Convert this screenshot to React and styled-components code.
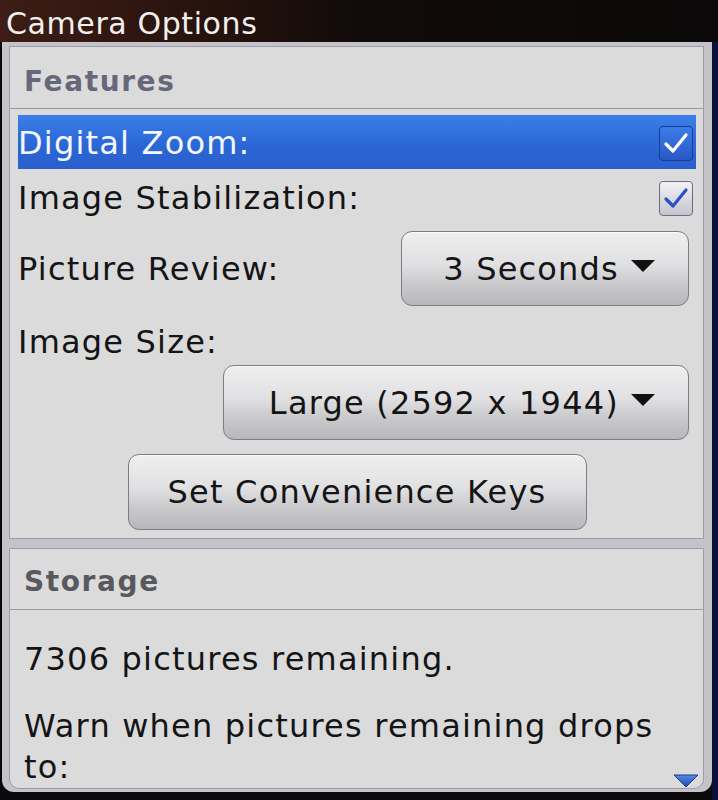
import React from "react";
import styled, { createGlobalStyle } from "styled-components";

const Global = createGlobalStyle`
  html, body { margin: 0; padding: 0; background: #0d0a08; }
  body { font-family: "DejaVu Sans", "Liberation Sans", sans-serif; }
  * { box-sizing: border-box; }
`;

const Page = styled.div`
  width: 718px;
  height: 800px;
  background: linear-gradient(90deg, #0a0808 0%, #0a0808 99%, #0b1038 99.3%);
  display: flex;
  flex-direction: column;
  overflow: hidden;
`;

const TitleBar = styled.div`
  height: 42px;
  flex: none;
  padding-left: 6px;
  background: linear-gradient(90deg, #3d1d15 0%, #2a140e 25%, #110b09 50%, #0a0808 100%);
  color: #f2f0ee;
  font-size: 30px;
  letter-spacing: 0.6px;
  line-height: 47px;
  white-space: nowrap;
  overflow: hidden;
`;

const Frame = styled.div`
  flex: 1;
  margin: 0 6px 8px 2px;
  background: #c3c3c9;
  border-radius: 0 0 12px 12px;
  padding: 4px 8px 3px 7px;
  display: flex;
  flex-direction: column;
  gap: 9px;
  min-height: 0;
`;

const Card = styled.section`
  background: #dbdbdc;
  border: 1px solid #9c9ca6;
  display: flex;
  flex-direction: column;
  position: relative;
  ${(p) => (p.$fill ? "flex: 1; min-height: 0; overflow: hidden; border-radius: 0 0 10px 10px;" : "flex: none;")}
`;

const SectionHeader = styled.div`
  height: ${(p) => p.$h}px;
  padding: ${(p) => p.$pt}px 0 0 14px;
  border-bottom: 1px solid #9a9aa4;
  font-weight: bold;
  font-size: 28px;
  letter-spacing: 1.6px;
  line-height: 32px;
  color: ${(p) => p.$color};
`;

const Rows = styled.div`
  display: flex;
  flex-direction: column;
  padding: 6px 7px 8px 8px;
`;

const SettingRow = styled.div`
  display: flex;
  align-items: center;
  justify-content: ${(p) => p.$justify || "space-between"};
  height: ${(p) => p.$h}px;
  padding-top: ${(p) => p.$pt || 0}px;
  margin-bottom: ${(p) => p.$mb || 0}px;
  background: ${(p) => (p.$selected ? "linear-gradient(#3a7fe9, #2b67d6 55%, #2a5fcc)" : "transparent")};
  color: ${(p) => (p.$selected ? "#f4f7ff" : "#141414")};
`;

const Label = styled.span`
  font-size: 32px;
  letter-spacing: 1.2px;
  line-height: 36px;
  white-space: nowrap;
`;

const CheckBox = styled.span`
  width: 34px;
  height: 35px;
  margin-right: 3px;
  border-radius: 4px;
  display: flex;
  align-items: center;
  justify-content: center;
  border: 1.5px solid ${(p) => (p.$selected ? "#1b3d96" : "#6c6c86")};
  background: ${(p) =>
    p.$selected
      ? "linear-gradient(#3e7ce8, #2858c6)"
      : "linear-gradient(#f2f2f6, #d6d6de 60%, #c4c4ce)"};
`;

const DropButton = styled.button`
  width: ${(p) => p.$w}px;
  height: ${(p) => p.$h || 75}px;
  margin-right: ${(p) => (p.$center ? 0 : 7)}px;
  border: 1px solid #7c7c84;
  border-radius: 11px;
  background: linear-gradient(#efeff0 0%, #e0e0e2 45%, #cacacd 70%, #b8b8bc 100%);
  box-shadow: inset 0 1px 0 #fafafa;
  display: flex;
  align-items: center;
  justify-content: ${(p) => (p.$center ? "center" : "flex-end")};
  gap: 12px;
  padding: 0 ${(p) => (p.$center ? 0 : 33)}px 0 0;
  font-family: inherit;
  font-size: 32px;
  letter-spacing: 1.2px;
  line-height: 36px;
  color: #141414;
  white-space: nowrap;
`;

const Caret = styled.span`
  width: 0;
  height: 0;
  border-left: 12px solid transparent;
  border-right: 12px solid transparent;
  border-top: 12px solid #111;
  margin-top: -6px;
`;

const Body = styled.div`
  padding: 29px 8px 0 14px;
  color: #141414;
  font-size: 32px;
  letter-spacing: 1.2px;
  line-height: 41px;
`;

const Para = styled.p`
  margin: 0 0 ${(p) => p.$mb || 0}px 0;
`;

const ScrollArrow = styled.svg`
  position: absolute;
  right: 4px;
  bottom: 0px;
`;

const Check = ({ color }) => (
  <svg width="26" height="22" viewBox="0 0 26 22">
    <path d="M3 12 L10 19 L23 3" fill="none" stroke={color} strokeWidth="3.2" strokeLinejoin="round" strokeLinecap="round" />
  </svg>
);

export default function App() {
  return (
    <>
      <Global />
      <Page>
        <TitleBar>Camera Options</TitleBar>
        <Frame>
          <Card>
            <SectionHeader $h={62} $pt={19} $color="#67677a">Features</SectionHeader>
            <Rows>
              <SettingRow $h={54} $pt={2} $selected>
                <Label>Digital Zoom:</Label>
                <CheckBox $selected>
                  <Check color="#ffffff" />
                </CheckBox>
              </SettingRow>
              <SettingRow $h={56} $pt={2}>
                <Label>Image Stabilization:</Label>
                <CheckBox>
                  <Check color="#2c4fc6" />
                </CheckBox>
              </SettingRow>
              <SettingRow $h={87}>
                <Label>Picture Review:</Label>
                <DropButton $w={288}>
                  3 Seconds <Caret />
                </DropButton>
              </SettingRow>
              <SettingRow $h={53} $pt={6}>
                <Label>Image Size:</Label>
              </SettingRow>
              <SettingRow $h={75} $justify="flex-end" $mb={14}>
                <DropButton $w={466}>
                  Large (2592 x 1944) <Caret />
                </DropButton>
              </SettingRow>
              <SettingRow $h={76} $justify="center">
                <DropButton $w={459} $h={76} $center>
                  Set Convenience Keys
                </DropButton>
              </SettingRow>
            </Rows>
          </Card>
          <Card $fill>
            <SectionHeader $h={61} $pt={17} $color="#58585e">Storage</SectionHeader>
            <Body>
              <Para $mb={26}>7306 pictures remaining.</Para>
              <Para>Warn when pictures remaining drops to:</Para>
            </Body>
            <ScrollArrow width="26" height="14" viewBox="0 0 26 14">
              <defs>
                <linearGradient id="arr" x1="0" y1="0" x2="0" y2="1">
                  <stop offset="0" stopColor="#5a8ae8" />
                  <stop offset="1" stopColor="#1f47a8" />
                </linearGradient>
              </defs>
              <path d="M1 1 L25 1 L13 13 Z" fill="url(#arr)" stroke="#1a3a8a" strokeWidth="1" />
            </ScrollArrow>
          </Card>
        </Frame>
      </Page>
    </>
  );
}
